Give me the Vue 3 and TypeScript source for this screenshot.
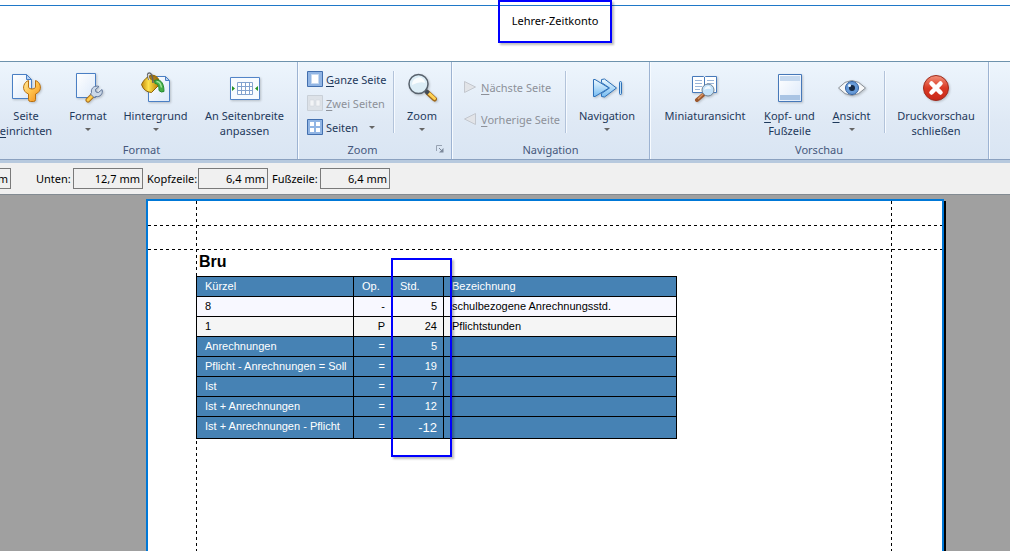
<script setup lang="ts">
interface Row {
  code: string
  op: string
  hours: string
  text: string
  kind: 'light' | 'grey' | 'sum'
}

const rows: Row[] = [
  { code: '8', op: '-', hours: '5', text: 'schulbezogene Anrechnungsstd.', kind: 'light' },
  { code: '1', op: 'P', hours: '24', text: 'Pflichtstunden', kind: 'grey' },
  { code: 'Anrechnungen', op: '=', hours: '5', text: '', kind: 'sum' },
  { code: 'Pflicht - Anrechnungen = Soll', op: '=', hours: '19', text: '', kind: 'sum' },
  { code: 'Ist', op: '=', hours: '7', text: '', kind: 'sum' },
  { code: 'Ist + Anrechnungen', op: '=', hours: '12', text: '', kind: 'sum' },
  { code: 'Ist + Anrechnungen - Pflicht', op: '=', hours: '-12', text: '', kind: 'sum' },
]

const margins = [
  { id: 'unten', label: 'Unten:', value: '12,7 mm' },
  { id: 'kopfzeile', label: 'Kopfzeile:', value: '6,4 mm' },
  { id: 'fusszeile', label: 'Fußzeile:', value: '6,4 mm' },
]
</script>

<template>
  <div class="app">
    <header class="titlebar">
      <h1 class="title">Lehrer-Zeitkonto</h1>
    </header>

    <nav class="ribbon" aria-label="Menüband">
      <section class="group g-format">
        <div class="items">
          <button class="big b-setup" type="button">
            <svg class="ico" viewBox="0 0 32 32">
              <defs>
                <linearGradient id="paper" x1="0" y1="0" x2="1" y2="1"><stop offset="0" stop-color="#fff" /><stop offset="1" stop-color="#dce9fa" /></linearGradient>
                <linearGradient id="gold" x1="0" y1="0" x2="1" y2="1"><stop offset="0" stop-color="#ffe9a0" /><stop offset=".5" stop-color="#ffc04a" /><stop offset="1" stop-color="#ef8b1c" /></linearGradient>
              </defs>
              <path d="M2.500 2.500h14l5 5v19h-19z" fill="url(#paper)" stroke="#4a7fc4" />
              <path d="M16.500 2.500v5h5z" fill="#b9d2f2" stroke="#4a7fc4" />
              <path d="M18.500 8.500C14 10 12 16 15 19.500q1 1.500 3.500 2.500v5.500q0 2 2 2h3q2 0 2-2V22q2.500-1 3.500-2.500c3-3.500 1-9.500-3.500-11v6.500q0 2-3.500 2t-3.500-2z" fill="url(#gold)" stroke="#b9700f" stroke-linejoin="round" />
            </svg>
            <span>Seite<br><u>e</u>inrichten</span>
          </button>
          <button class="big b-format" type="button">
            <svg class="ico" viewBox="0 0 32 32">
              <path d="M4.500 1.500h19v24h-19z" fill="url(#paper)" stroke="#4a7fc4" />
              <path d="M16 28l6-6" stroke="#a8701c" stroke-width="5" stroke-linecap="round" />
              <path d="M16 28l6-6" stroke="#ffcb4d" stroke-width="3" stroke-linecap="round" />
              <path d="M27 14.500c-4-1.500-8.500 1.500-7.500 6l-1 1.500 3.500 3.500 2-1c4 1 7.500-3 6-7l-3.500 3-2.500-.5-.5-2.500z" fill="#cbd8e8" stroke="#62779a" stroke-linejoin="round" />
            </svg>
            <span>Format</span><i class="caret"></i>
          </button>
          <button class="big b-back" type="button">
            <svg class="ico" viewBox="0 0 32 32">
              <defs><linearGradient id="bucket"><stop offset="0" stop-color="#c48a08" /><stop offset=".4" stop-color="#ffe34d" /><stop offset="1" stop-color="#b87a00" /></linearGradient></defs>
              <path d="M8.500 4.500h17l4 4v21h-21z" fill="url(#paper)" stroke="#4a7fc4" />
              <path d="M25.500 4.500v4h4z" fill="#b9d2f2" stroke="#4a7fc4" />
              <path d="M1.500 12.500Q5 5 12 3q4 0 6.500 4 1 3-.500 7l-6.500 6.500Q4 20 1.500 12.500z" fill="url(#bucket)" stroke="#8c6207" />
              <path d="M8 4.500q8-2 10 4-2 2-5 0-3-1-5-4z" fill="#a87c18" stroke="#7a5608" stroke-width=".5" />
              <path d="M9 8Q6 1 9.500 1q3 0 3.500 10" fill="none" stroke="#5f6266" stroke-width="1.500" />
              <path d="M9.500 8Q7 2 9.500 2" fill="none" stroke="#fff" stroke-width=".8" />
              <path d="M14.500 8.500c5-2 9.500 1 9.500 11q-3 1.500-5-1c0-5-1-6.500-4-7z" fill="#45ae45" stroke="#258a32" />
              <path d="M16.500 9.500q4 0 5 6" fill="none" stroke="#a8e5a1" stroke-width="1.500" />
            </svg>
            <span>Hintergrund</span><i class="caret"></i>
          </button>
          <button class="big b-fit" type="button">
            <svg class="ico" viewBox="0 0 32 32">
              <path d="M1.500 5.500h29v22h-29z" fill="#f7fbff" stroke="#5284c8" />
              <path d="M8.500 10.500h15v12h-15zM8.500 14.500h15M8.500 18.500h15M12.500 10.500v12M16.500 10.500v12M20.500 10.500v12" fill="#fff" stroke="#83a3cf" />
              <path d="M3 14v5l3-2.500zM29 14v5l-3-2.500z" fill="#249425" />
            </svg>
            <span>An Seitenbreite<br>anpassen</span>
          </button>
        </div>
        <h2>Format</h2>
      </section>

      <section class="group g-zoom">
        <div class="items">
          <div class="stack three">
            <button class="small" type="button">
              <svg class="sico" viewBox="0 0 16 16"><path d="M.5.5h15v15H.5z" fill="#91b5e4" stroke="#426fae" /><path d="M4.500 3.500h7v9h-7z" fill="#fff" stroke="#c8daf1" /></svg>
              <span><u>G</u>anze Seite</span>
            </button>
            <button class="small" type="button" disabled>
              <svg class="sico" viewBox="0 0 16 16"><path d="M.5.5h15v15H.5z" fill="#dde2e8" stroke="#c9d0d8" /><path d="M3 5h4v6H3zM9 5h4v6H9z" fill="#f2f4f6" stroke="#ccd2d9" stroke-width=".5" /></svg>
              <span><u>Z</u>wei Seiten</span>
            </button>
            <button class="small" type="button">
              <svg class="sico" viewBox="0 0 16 16"><path d="M.5.5h15v15H.5z" fill="#91b5e4" stroke="#426fae" /><path d="M3 3h4v4H3zM9 3h4v4H9zM3 9h4v4H3zM9 9h4v4H9z" fill="#fff" /></svg>
              <span>Seiten</span><i class="caret side"></i>
            </button>
          </div>
          <i class="rule"></i>
          <button class="big b-zoom" type="button">
            <svg class="ico" viewBox="0 0 32 32">
              <path d="M22 21l6.500 6" stroke="#a06a1c" stroke-width="5" stroke-linecap="round" />
              <path d="M22 20.500l6.500 6" stroke="#ffd255" stroke-width="3" stroke-linecap="round" />
              <path d="M18.500 17.500l4 4" stroke="#444c58" stroke-width="4" />
              <circle cx="12.500" cy="12" r="9.500" fill="#dcedf6" stroke="#58626d" stroke-width="1.500" />
              <path d="M6 13q0-7 8-8 5 2 5 6-5-2-13 2z" fill="#fff" opacity=".85" />
            </svg>
            <span>Zoom</span><i class="caret"></i>
          </button>
        </div>
        <h2>Zoom</h2>
        <button class="launcher" type="button" aria-label="Zoom-Optionen">
          <svg viewBox="0 0 8 8"><path d="M.5 6V.5H6" fill="none" stroke="#98a3b3" /><path d="M3 3l3 3" fill="none" stroke="#7d899b" /><path d="M3 7.500h4.500V3z" fill="#7d899b" /></svg>
        </button>
      </section>

      <section class="group g-nav">
        <div class="items">
          <div class="stack two">
            <button class="small" type="button" disabled>
              <svg class="sico" viewBox="0 0 16 16"><path d="M2.500 2.500v11l11-5.500z" fill="#e2e4e8" stroke="#c3c7ce" stroke-linejoin="round" /></svg>
              <span><u>N</u>ächste Seite</span>
            </button>
            <button class="small" type="button" disabled>
              <svg class="sico" viewBox="0 0 16 16"><path d="M13.500 2.500v11L2.500 8z" fill="#e2e4e8" stroke="#c3c7ce" stroke-linejoin="round" /></svg>
              <span><u>V</u>orherige Seite</span>
            </button>
          </div>
          <i class="rule"></i>
          <button class="big b-navi" type="button">
            <svg class="ico" viewBox="0 0 32 32">
              <defs><linearGradient id="sky" x1="0" y1="0" x2="0" y2="1"><stop offset="0" stop-color="#effaff" /><stop offset="1" stop-color="#76bcf2" /></linearGradient></defs>
              <path d="M10.500 7.500v3l8 5.500-8 5.500v3l3 .5 12-9-12-9z" fill="url(#sky)" stroke="#2d70b9" stroke-linejoin="round" />
              <path d="M2.500 7.500v17h1.500l14-8.500-14-8.500z" fill="url(#sky)" stroke="#2d70b9" stroke-linejoin="round" />
              <rect x="28.500" y="9.500" width="2" height="13" rx="1" fill="#bfe1fa" stroke="#2d70b9" />
            </svg>
            <span>Navigation</span><i class="caret"></i>
          </button>
        </div>
        <h2>Navigation</h2>
      </section>

      <section class="group g-preview">
        <div class="items">
          <button class="big b-thumbs" type="button">
            <svg class="ico" viewBox="0 0 32 32">
              <path d="M3.500 4.500h11l1 1 1-1h11v16h-11l-1 1-1-1h-11z" fill="#fff" stroke="#4779ba" />
              <path d="M15.500 5v16" stroke="#4779ba" />
              <path d="M6 8.500h7M6 11.500h7M6 14.500h7M6 17.500h5M18 8.500h7M18 11.500h7" stroke="#9ab5d8" />
              <path d="M14 23l-6 5" stroke="#9b572d" stroke-width="4" stroke-linecap="round" />
              <path d="M14 22l-5 5" stroke="#dd9662" stroke-width="1.500" />
              <circle cx="19" cy="18" r="6" fill="#c3e2fa" stroke="#6e8194" />
              <path d="M15 18q1-4 5-4 2 1 2 3-4-1-7 1z" fill="#fff" opacity=".8" />
            </svg>
            <span>Miniaturansicht</span>
          </button>
          <button class="big b-head" type="button">
            <svg class="ico" viewBox="0 0 32 32"><path d="M4.500 2.500h23v27h-23z" fill="url(#paper)" stroke="#4678b9" /><path d="M6 4h20v5H6z" fill="#c6d9ef" /><path d="M6 23h20v5H6z" fill="#a9c4e4" /></svg>
            <span><u>K</u>opf- und<br>Fußzeile</span>
          </button>
          <button class="big b-view" type="button">
            <svg class="ico" viewBox="0 0 32 32">
              <path d="M2.500 16Q15.500 1 29.500 16 15.500 31 2.500 16z" fill="#f7f8f9" stroke="#858c94" />
              <circle cx="16" cy="16" r="6.500" fill="#689bd8" stroke="#315f9f" />
              <circle cx="16" cy="16" r="3" fill="#172943" /><circle cx="13.500" cy="13.500" r="1.500" fill="#e8f5ff" />
            </svg>
            <span><u>A</u>nsicht</span><i class="caret"></i>
          </button>
          <i class="rule"></i>
          <button class="big b-close" type="button">
            <svg class="ico" viewBox="0 0 32 32">
              <defs><linearGradient id="red" x1="0" y1="0" x2="0" y2="1"><stop offset="0" stop-color="#f3917a" /><stop offset=".5" stop-color="#d93a25" /><stop offset="1" stop-color="#c92717" /></linearGradient></defs>
              <circle cx="16" cy="16" r="12.500" fill="url(#red)" stroke="#9d2a1c" />
              <path d="M11.500 11.500l9 9M20.500 11.500l-9 9" stroke="#fff" stroke-width="4.500" stroke-linecap="round" />
            </svg>
            <span>Druckvorschau<br>schließen</span>
          </button>
        </div>
        <h2>Vorschau</h2>
      </section>
    </nav>

    <form class="margins" @submit.prevent>
      <input class="field cut" aria-label="Oben" value="mm" readonly>
      <template v-for="m in margins" :key="m.id">
        <label :for="m.id" :class="m.id">{{ m.label }}</label>
        <input :id="m.id" class="field" :value="m.value" readonly>
      </template>
    </form>

    <main class="canvas">
      <article class="sheet">
        <i class="guide v left"></i><i class="guide v right"></i>
        <i class="guide h top"></i><i class="guide h head"></i>
        <h2 class="teacher">Bru</h2>
        <div class="report">
          <table>
            <colgroup><col class="c1"><col class="c2"><col class="c3"><col class="c4"></colgroup>
            <thead>
              <tr><th>Kürzel</th><th>Op.</th><th>Std.</th><th>Bezeichnung</th></tr>
            </thead>
            <tbody>
              <tr v-for="r in rows" :key="r.code" :class="r.kind">
                <td>{{ r.code }}</td>
                <td class="num">{{ r.op }}</td>
                <td class="num">{{ r.hours }}</td>
                <td>{{ r.text }}</td>
              </tr>
            </tbody>
          </table>
          <i class="mark"></i>
        </div>
      </article>
    </main>
  </div>
</template>

<style>
html, body { height: 100%; margin: 0; }
#app { height: 100%; }
</style>

<style scoped>
* { box-sizing: border-box; }
.app { height: 100%; display: flex; flex-direction: column; overflow: hidden; background: #fff; font-family: "Noto Sans", "Open Sans", sans-serif; font-size: 11px; }
h1, h2 { margin: 0; font-weight: 400; }

.titlebar { flex: none; height: 61px; padding-left: 498px; background: linear-gradient(#1f78c8, #1f78c8) 0 5px / 100% 1px no-repeat; }
.title { width: 114px; height: 43px; border: 2px solid #00f; box-shadow: 2px 2px 2px #0004; font-size: 11px; line-height: 38px; text-align: center; color: #000; white-space: nowrap; }

.ribbon { flex: none; display: flex; height: 102px; border-top: 1px solid #6d92ad; background: linear-gradient(#edf5fd, #dfe9f5 60%, #d9e5f3); border-bottom: 3px solid #b7c9de; box-shadow: inset 0 -1px #8aa1c0; }
.group { position: relative; flex: none; display: flex; flex-direction: column; padding-top: 7px; border-right: 1px solid #9db3d2; box-shadow: 1px 0 #f7fbff; margin-bottom: 1px; }
.g-format { width: 312px; margin-left: -14px; }
.g-zoom { width: 154px; }
.g-nav { width: 198px; }
.g-preview { width: 339px; }
.items { display: flex; height: 73px; }
.group h2 { color: #46587c; font-size: 11px; line-height: 15px; text-align: center; }
.g-zoom h2 { margin-right: 24px; }
button { border: 0; padding: 0; background: none; font: inherit; line-height: 15px; color: #1e395b; white-space: nowrap; }
button:disabled { color: #8d9199; }
u { text-underline-offset: 2px; }
.big { flex: none; display: flex; flex-direction: column; align-items: center; padding-top: 3px; }
.ico { width: 32px; height: 32px; margin-bottom: 4px; flex: none; filter: drop-shadow(1px 1px 1px #0003); }
.caret { border: 3px solid transparent; border-top: 3px solid #656565; border-bottom: 0; margin-top: 5px; }
.caret.side { margin: 0 0 0 8px; }
.b-setup { width: 80px; }
.b-format { width: 44px; }
.b-back { width: 91px; }
.b-fit { width: 87px; }
.b-zoom { width: 54px; }
.b-navi { width: 80px; }
.b-thumbs { width: 110px; }
.b-head { width: 59px; }
.b-view { width: 65px; }
.b-close { width: 100px; }
.rule { flex: none; width: 2px; height: 62px; margin-top: 2px; background: linear-gradient(90deg, #b2c3da 50%, #f6faff 50%); }
.stack { flex: none; display: flex; flex-direction: column; }
.three { width: 95px; padding: 2px 0 0 9px; gap: 8px; }
.two { width: 113px; padding: 10px 0 0 10px; gap: 16px; }
.small { display: flex; align-items: center; gap: 3px; height: 16px; }
.sico { width: 16px; height: 16px; flex: none; }
.launcher { position: absolute; right: 7px; bottom: 6px; width: 8px; height: 8px; }
.launcher svg { display: block; width: 8px; height: 8px; }

.margins { flex: none; display: flex; align-items: center; height: 32px; padding-bottom: 1px; background: #f0f0f0; border-bottom: 1px solid #838b92; font-size: 11px; gap: 4px; }
.field { width: 70px; height: 21px; flex: none; border: 1px solid #7a7a7a; background: #f0f0f0; color: #000; padding: 0 2px; font: inherit; text-align: right; border-radius: 0; }
.cut { margin: 0 21px 0 -59px; }
.unten { width: 33px; }
.kopfzeile { width: 47px; }
.fusszeile { width: 44px; }
.margins label { white-space: nowrap; }

.canvas { flex: 1; min-height: 0; display: flex; background: #a0a0a0; padding: 4px 66px 0 146px; }
.sheet { position: relative; flex: 1; border: 2px solid #0078d7; border-bottom: 0; background: #fff; box-shadow: 2px 2px #000; padding: 49px 0 0 48px; font-family: "Liberation Sans", Arial, sans-serif; }
.guide { position: absolute; }
.v { top: 0; bottom: 0; width: 1px; background: repeating-linear-gradient(180deg, #000 0 3px, transparent 3px 6px); }
.h { left: 0; right: 0; height: 1px; background: repeating-linear-gradient(90deg, #000 0 3px, transparent 3px 6px); }
.left { left: 48px; }
.right { right: 50px; }
.top { top: 24px; }
.head { top: 48px; }
.teacher { height: 26px; padding-left: 3px; font-size: 16px; font-weight: 700; line-height: 23px; color: #000; }
.report { position: relative; width: 481px; }
table { width: 481px; table-layout: fixed; border-collapse: collapse; font-size: 11px; line-height: 15px; color: #000; }
.c1 { width: 157px; }
.c2 { width: 38px; }
.c3 { width: 52px; }
th, td { height: 20px; padding: 0 8px; border: 1px solid #000; font-weight: 400; text-align: left; white-space: nowrap; }
th, .sum { background: #4682b4; color: #fff; }
.light { background: #f8f8ff; }
.grey { background: #f5f5f5; }
.num { text-align: right; padding-right: 6px; }
tr:last-child td { height: 22px; padding-bottom: 2px; }
tr:last-child td:nth-child(3) { font-size: 13px; padding-bottom: 0; }
thead tr:last-child th { height: 20px; }
.mark { position: absolute; left: 195px; top: -18px; width: 61px; height: 199px; border: 2px solid #00f; box-shadow: 2px 2px 2px #0004; }
</style>
